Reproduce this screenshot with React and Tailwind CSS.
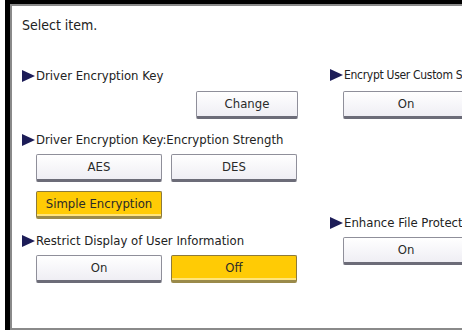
import React from 'react';

const font = { fontFamily: '"DejaVu Sans", sans-serif' };

function Arrow() {
  return (
    <svg width="13" height="12" viewBox="0 0 13 12" className="shrink-0">
      <polygon points="0,0 13,6 0,12" fill="#1d1d58" />
    </svg>
  );
}

function Label({ children, small }) {
  return (
    <div className="flex items-center h-[20px] whitespace-nowrap">
      <Arrow />
      <span className={small ? 'ml-[1px] text-[12px] tracking-[-0.3px] text-[#222]' : 'ml-[1px] text-[13px] text-[#222]'}>{children}</span>
    </div>
  );
}

function Btn({ children, active, className = '' }) {
  const look = active
    ? 'bg-[#ffcb05] border-[#8c7a3c] border-b-[#9a8a4a] shadow-[inset_0_-2px_0_#ffe47a]'
    : 'bg-gradient-to-b from-white to-[#efeef4] border-[#8f8f9a] border-b-[#6c6c78]';
  return (
    <div className={`h-[28px] flex items-center justify-center border border-b-[3px] rounded-[2px] text-[13px] font-normal text-[#2a2a2a] shrink-0 ${look} ${className}`}>
      {children}
    </div>
  );
}

export default function App() {
  return (
    <div className="w-[462px] h-[331px] bg-white overflow-hidden font-stretch-condensed font-normal" style={font}>
      <div className="ml-[5px] h-[330px] border-l-[5px] border-t-[4px] border-black">
        <div className="h-full border-l-2 border-t-2 border-b-2 border-[#8a8a8a] flex">
          {/* left column */}
          <div className="w-[318px] pl-[10px] pt-[9px] flex flex-col">
            <div className="h-[20px] text-[14px] text-[#222] flex items-center">Select item.</div>
            <div className="mt-[31px]"><Label>Driver Encryption Key</Label></div>
            <div className="mt-[5px] flex"><Btn className="ml-[174px] w-[102px]">Change</Btn></div>
            <div className="mt-[11px]"><Label>Driver Encryption Key:Encryption Strength</Label></div>
            <div className="mt-[4px] flex gap-[9px] pl-[14px]">
              <Btn className="w-[126px]">AES</Btn>
              <Btn className="w-[126px]">DES</Btn>
            </div>
            <div className="mt-[9px] flex pl-[14px]">
              <Btn active className="w-[126px]">Simple Encryption</Btn>
            </div>
            <div className="mt-[12px]"><Label>Restrict Display of User Information</Label></div>
            <div className="mt-[4px] flex gap-[9px] pl-[14px]">
              <Btn className="w-[126px]">On</Btn>
              <Btn active className="w-[126px]">Off</Btn>
            </div>
          </div>
          {/* right column */}
          <div className="flex-1 pt-[59px] flex flex-col overflow-hidden">
            <Label small>Encrypt User Custom Setting</Label>
            <div className="mt-[6px] flex pl-[13px]"><Btn className="w-[126px]">On</Btn></div>
            <div className="mt-[94px]"><Label>Enhance File Protection</Label></div>
            <div className="mt-[4px] flex pl-[13px]"><Btn className="w-[126px]">On</Btn></div>
          </div>
        </div>
      </div>
    </div>
  );
}
